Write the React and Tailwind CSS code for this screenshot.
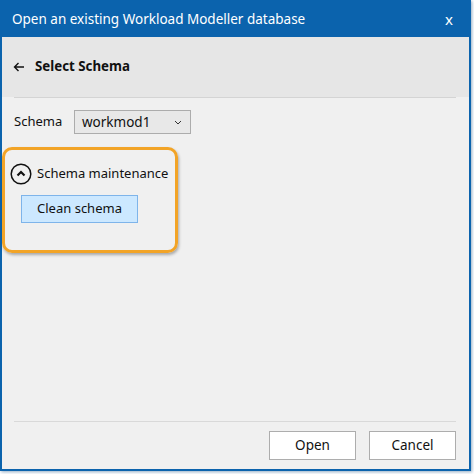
import React from "react";

export default function App() {
  const font = { fontFamily: '"Noto Sans", "Open Sans", sans-serif' };
  return (
    <div className="w-[474px] h-[474px] bg-white overflow-hidden" style={font}>
      <div className="w-[471px] h-[471px] border-2 border-[#0b63ad] bg-[#f0f0f0] flex flex-col shadow-[1px_1px_3px_rgba(40,90,140,0.5)]">
        {/* Title bar */}
        <div className="h-[35px] bg-[#0b63ad] flex items-center justify-between pl-[10px] pr-[16px] text-white shrink-0">
          <span className="text-[13.5px] leading-none">Open an existing Workload Modeller database</span>
          <span className="text-[15px] leading-none">x</span>
        </div>
        {/* Header */}
        <div className="h-[60px] bg-[#e6e6e6] flex items-center pl-[11px] gap-[10px] shrink-0">
          <svg className="shrink-0" width="12" height="10" viewBox="0 0 12 10" fill="none" stroke="#111" strokeWidth="1.4">
            <path d="M11 5H1.5M5.5 1L1.5 5l4 4" />
          </svg>
          <span className="text-[13.3px] font-bold text-[#111]">Select Schema</span>
        </div>
        <div className="h-px bg-[#d4d4d4] ml-[12px] mr-[13px] shrink-0" />
        {/* Body */}
        <div className="flex-1 flex flex-col pl-[12px] pt-[12px]">
          <div className="flex items-center h-[24px]">
            <span className="text-[13px] text-[#111] w-[60px]">Schema</span>
            <div className="w-[117px] h-[24px] border border-[#acacac] bg-[#e8e8e8] flex items-center justify-between pl-[7px] pr-[8px]">
              <span className="text-[13.5px] text-[#111]">workmod1</span>
              <svg className="shrink-0" width="8" height="5" viewBox="0 0 8 5" fill="none" stroke="#333" strokeWidth="1">
                <path d="M1 1l3 3 3-3" />
              </svg>
            </div>
          </div>
          <div className="ml-[-12px] mt-[13px] w-[176px] h-[106px] border-[3px] border-[#f2a427] rounded-[10px] shadow-[1px_2px_3px_rgba(0,0,0,0.3)] flex flex-col pl-[5px] pt-[13px]">
            <div className="flex items-center gap-[5px] h-[22px]">
              <svg className="shrink-0" width="22" height="22" viewBox="0 0 22 22" fill="none">
                <circle cx="11" cy="11" r="9.8" stroke="#111" strokeWidth="1.5" />
                <path d="M7.5 12.5L11 9l3.5 3.5" stroke="#111" strokeWidth="2.2" />
              </svg>
              <span className="text-[13px] text-[#111] whitespace-nowrap">Schema maintenance</span>
            </div>
            <button className="ml-[11px] mt-[10px] w-[117px] h-[28px] bg-[#cce8ff] border border-[#7eb4ea] text-[13px] text-[#111] flex items-center justify-center">
              Clean schema
            </button>
          </div>
        </div>
        {/* Footer */}
        <div className="h-px bg-[#d9d9d9] ml-[12px] mr-[13px] shrink-0" />
        <div className="h-[47px] flex items-start justify-end gap-[13px] pt-[9px] pr-[13px] shrink-0">
          <button className="w-[87px] h-[29px] bg-white border border-[#adadad] text-[13.5px] text-[#111]">Open</button>
          <button className="w-[87px] h-[29px] bg-white border border-[#adadad] text-[13.5px] text-[#111]">Cancel</button>
        </div>
      </div>
    </div>
  );
}
